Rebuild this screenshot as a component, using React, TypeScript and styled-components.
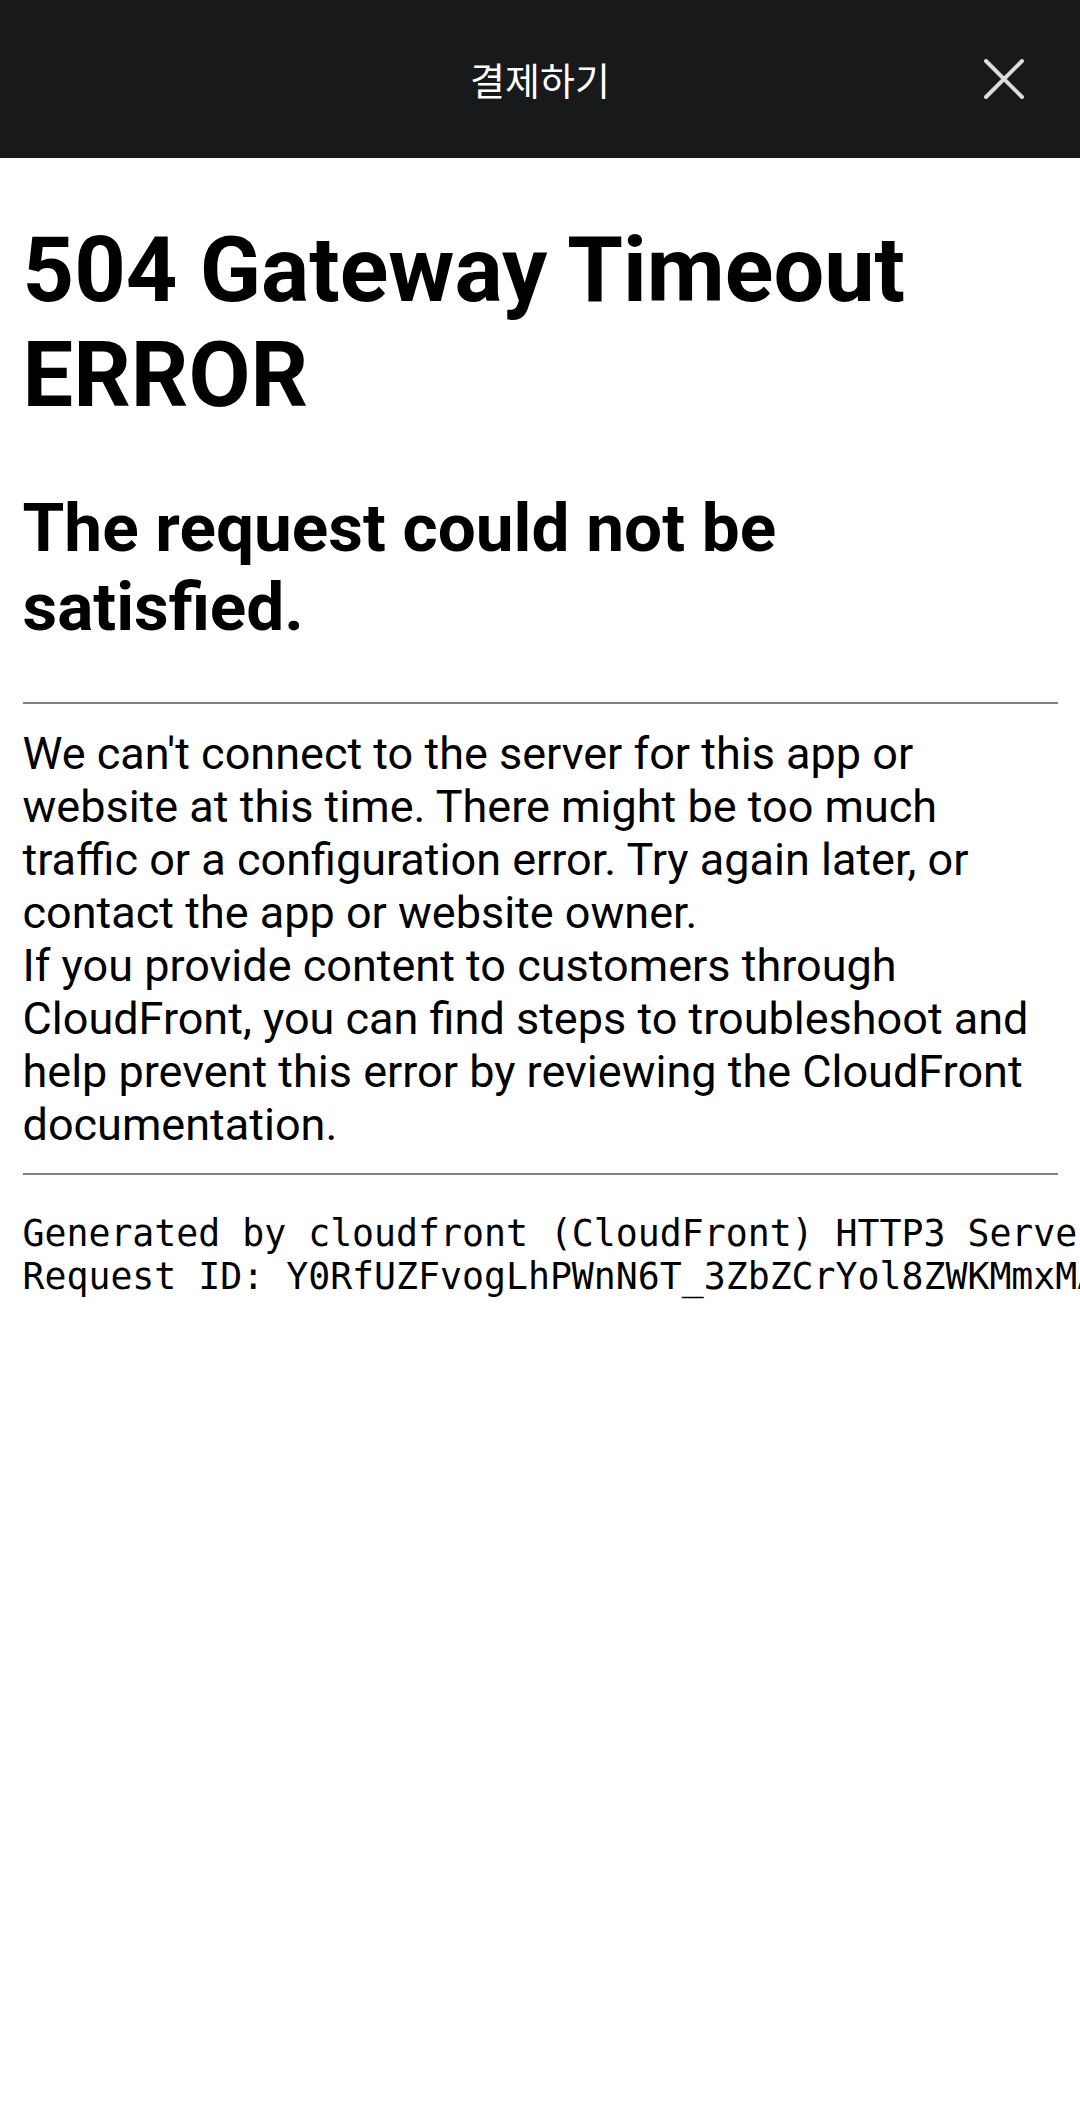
import { createGlobalStyle } from 'styled-components'
import styled from 'styled-components'

// the webview renders at ~2.8125 device px per css px, so every value here is scaled by that
const GlobalStyle = createGlobalStyle`
  html, body {
    margin: 0;
    padding: 0;
    background: #ffffff;
  }
  body {
    font-family: Roboto, "Liberation Sans", "Noto Sans CJK KR", sans-serif;
    color: #000000;
  }
`

const Screen = styled.div`
  width: 1080px;
  min-height: 2124px;
  overflow: hidden;
  background: #ffffff;
`

const TopBar = styled.header`
  height: 157.5px;
  display: grid;
  grid-template-columns: 1fr auto 1fr;
  align-items: center;
  background: #18191b;
`

const BarTitle = styled.h3`
  grid-column: 2;
  margin: 0;
  color: #ffffff;
  font-family: "Noto Sans CJK KR", Roboto, sans-serif;
  font-size: 38px;
  font-weight: 400;
  line-height: 1;
`

const CloseButton = styled.button`
  grid-column: 3;
  justify-self: end;
  width: 68px;
  height: 68px;
  margin-right: 42px;
  padding: 0;
  border: none;
  background: none;
  display: flex;
  align-items: center;
  justify-content: center;
  cursor: pointer;
`

const Document = styled.main`
  margin: 22.5px;
`

const Headline = styled.h1`
  margin: 0.67em 0;
  font-size: 90px;
  font-weight: 700;
  line-height: normal;
`

const Subhead = styled.h2`
  margin: 0.83em 0;
  font-size: 67.5px;
  font-weight: 700;
  line-height: normal;
`

const Rule = styled.hr`
  height: 0;
  margin: 22.5px 0;
  border: none;
  border-top: 2.8px solid #808080;
`

const Message = styled.div`
  font-size: 45px;
  line-height: normal;
`

const Trace = styled.pre`
  margin: 36.5px 0;
  font-family: "DejaVu Sans Mono", "Liberation Mono", monospace;
  font-size: 36.5px;
  line-height: normal;
  white-space: pre;
`

const CloseIcon = () => (
  <svg width="40" height="40" viewBox="0 0 40 40" fill="none">
    <path d="M2 2L38 38M38 2L2 38" stroke="#dcdcdc" strokeWidth="4" strokeLinecap="round" />
  </svg>
)

export default function App() {
  return (
    <Screen>
      <GlobalStyle />
      <TopBar>
        <BarTitle>결제하기</BarTitle>
        <CloseButton aria-label="닫기">
          <CloseIcon />
        </CloseButton>
      </TopBar>
      <Document>
        <Headline>504 Gateway Timeout ERROR</Headline>
        <Subhead>The request could not be satisfied.</Subhead>
        <Rule />
        <Message>
          We can't connect to the server for this app or website at this time. There might be too much
          traffic or a configuration error. Try again later, or contact the app or website owner.
          <br />
          If you provide content to customers through CloudFront, you can find steps to troubleshoot and
          help prevent this error by reviewing the CloudFront documentation.
        </Message>
        <Rule />
        <Trace>
          {'Generated by cloudfront (CloudFront) HTTP3 Server\nRequest ID: Y0RfUZFvogLhPWnN6T_3ZbZCrYol8ZWKMmxMAq7kR2wLx9vTqg=='}
        </Trace>
      </Document>
    </Screen>
  )
}
